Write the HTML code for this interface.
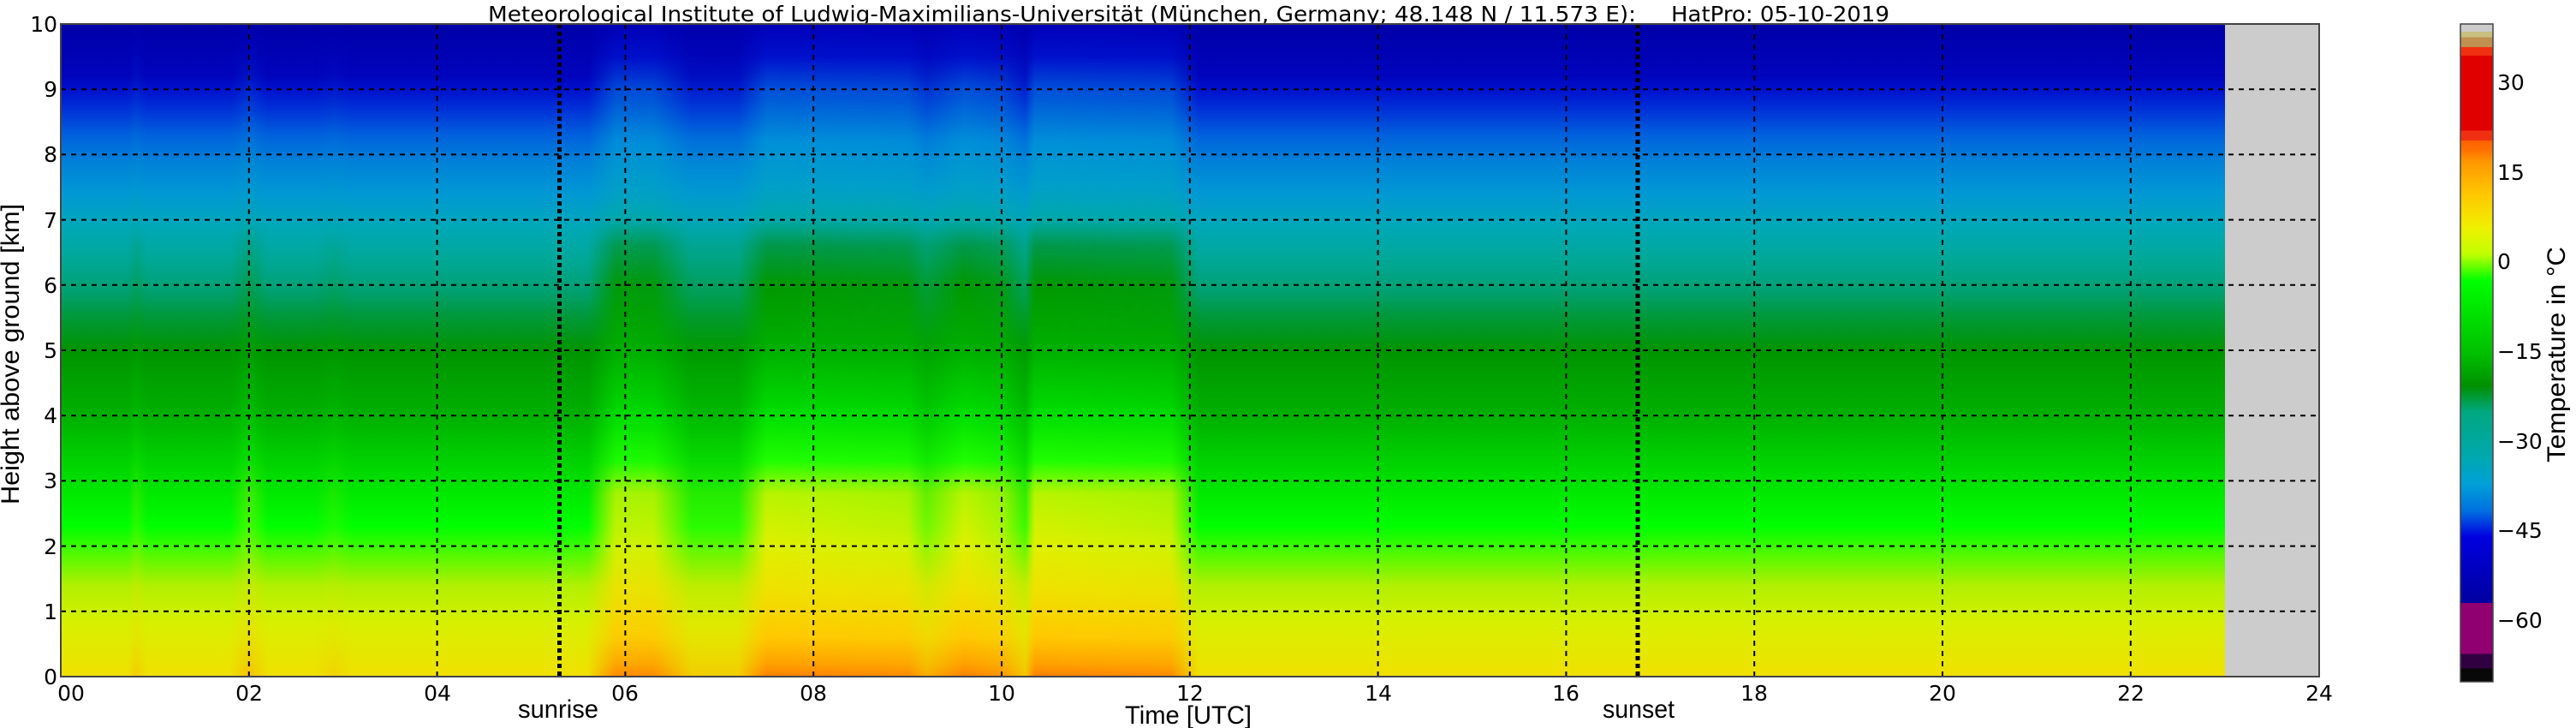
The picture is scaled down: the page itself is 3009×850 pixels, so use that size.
<!DOCTYPE html>
<html><head><meta charset="utf-8"><style>
html,body{margin:0;padding:0;background:#fff;width:3009px;height:850px;overflow:hidden}
svg{display:block}
.t{font-family:"DejaVu Sans","Liberation Sans",sans-serif;font-size:25px;fill:#000}
.n{font-family:"Liberation Sans",sans-serif;font-size:30px;fill:#000}
</style></head><body>
<svg width="3009" height="850" viewBox="0 0 3009 850" xmlns="http://www.w3.org/2000/svg">
<defs>
<linearGradient id="calm" x1="0" y1="28" x2="0" y2="790" gradientUnits="userSpaceOnUse">
<stop offset="0" stop-color="#0000a8"/>
<stop offset="0.08" stop-color="#0004bc"/>
<stop offset="0.1" stop-color="#0010cc"/>
<stop offset="0.13" stop-color="#0030d8"/>
<stop offset="0.17" stop-color="#0060dc"/>
<stop offset="0.21" stop-color="#0080d8"/>
<stop offset="0.26" stop-color="#0098d4"/>
<stop offset="0.31" stop-color="#00a8b8"/>
<stop offset="0.36" stop-color="#00a898"/>
<stop offset="0.41" stop-color="#00a070"/>
<stop offset="0.45" stop-color="#009838"/>
<stop offset="0.5" stop-color="#009400"/>
<stop offset="0.6" stop-color="#00b000"/>
<stop offset="0.7" stop-color="#00e000"/>
<stop offset="0.77" stop-color="#00ff00"/>
<stop offset="0.82" stop-color="#60f800"/>
<stop offset="0.86" stop-color="#b0f000"/>
<stop offset="0.92" stop-color="#d8f000"/>
<stop offset="1" stop-color="#f0e000"/>
</linearGradient>
<linearGradient id="warm" x1="0" y1="28" x2="0" y2="790" gradientUnits="userSpaceOnUse">
<stop offset="0" stop-color="#0000b8"/>
<stop offset="0.05" stop-color="#0010cc"/>
<stop offset="0.1" stop-color="#0050d8"/>
<stop offset="0.18" stop-color="#0090d8"/>
<stop offset="0.25" stop-color="#00a0c8"/>
<stop offset="0.3" stop-color="#00a8a8"/>
<stop offset="0.34" stop-color="#009848"/>
<stop offset="0.4" stop-color="#009800"/>
<stop offset="0.5" stop-color="#00b000"/>
<stop offset="0.6" stop-color="#00e000"/>
<stop offset="0.67" stop-color="#20ff00"/>
<stop offset="0.72" stop-color="#b8f400"/>
<stop offset="0.8" stop-color="#e0f000"/>
<stop offset="0.87" stop-color="#f0e000"/>
<stop offset="0.94" stop-color="#ffc800"/>
<stop offset="0.98" stop-color="#ffa000"/>
<stop offset="1" stop-color="#ff8000"/>
</linearGradient>
<linearGradient id="wmask" x1="71" y1="0" x2="2599" y2="0" gradientUnits="userSpaceOnUse">
<stop offset="0" stop-color="#000"/>
<stop offset="0.0310" stop-color="#000"/>
<stop offset="0.0348" stop-color="#333"/>
<stop offset="0.0400" stop-color="#000"/>
<stop offset="0.0783" stop-color="#000"/>
<stop offset="0.0870" stop-color="#555"/>
<stop offset="0.0957" stop-color="#000"/>
<stop offset="0.1174" stop-color="#000"/>
<stop offset="0.1261" stop-color="#222"/>
<stop offset="0.1348" stop-color="#000"/>
<stop offset="0.2435" stop-color="#000"/>
<stop offset="0.2565" stop-color="#e6e6e6"/>
<stop offset="0.2739" stop-color="#e6e6e6"/>
<stop offset="0.2913" stop-color="#333"/>
<stop offset="0.3130" stop-color="#333"/>
<stop offset="0.3261" stop-color="#fff"/>
<stop offset="0.3913" stop-color="#e6e6e6"/>
<stop offset="0.4000" stop-color="#888"/>
<stop offset="0.4174" stop-color="#fff"/>
<stop offset="0.4348" stop-color="#cccccc"/>
<stop offset="0.4457" stop-color="#444"/>
<stop offset="0.4500" stop-color="#fff"/>
<stop offset="0.5130" stop-color="#e6e6e6"/>
<stop offset="0.5260" stop-color="#000"/>
<stop offset="1" stop-color="#000"/>
</linearGradient>
<mask id="m"><rect x="71" y="28" width="2528" height="762" fill="url(#wmask)"/></mask>
<linearGradient id="cb" x1="0" y1="28" x2="0" y2="796" gradientUnits="userSpaceOnUse">
<stop offset="0" stop-color="#cccccc"/>
<stop offset="0.012" stop-color="#cccccc"/>
<stop offset="0.012" stop-color="#c8c080"/>
<stop offset="0.02" stop-color="#c8c080"/>
<stop offset="0.02" stop-color="#c09050"/>
<stop offset="0.035" stop-color="#c09050"/>
<stop offset="0.035" stop-color="#f03010"/>
<stop offset="0.048" stop-color="#f03010"/>
<stop offset="0.048" stop-color="#e00000"/>
<stop offset="0.162" stop-color="#e00000"/>
<stop offset="0.162" stop-color="#f03010"/>
<stop offset="0.177" stop-color="#f03010"/>
<stop offset="0.177" stop-color="#ff6000"/>
<stop offset="0.191" stop-color="#ff7000"/>
<stop offset="0.21" stop-color="#ff9800"/>
<stop offset="0.26" stop-color="#ffc800"/>
<stop offset="0.31" stop-color="#f0f000"/>
<stop offset="0.35" stop-color="#c0ff00"/>
<stop offset="0.39" stop-color="#00ff00"/>
<stop offset="0.5" stop-color="#00c000"/>
<stop offset="0.55" stop-color="#009000"/>
<stop offset="0.59" stop-color="#00a880"/>
<stop offset="0.66" stop-color="#00a8b0"/>
<stop offset="0.7" stop-color="#00a0d8"/>
<stop offset="0.74" stop-color="#0070e0"/>
<stop offset="0.78" stop-color="#0000e0"/>
<stop offset="0.88" stop-color="#0000a0"/>
<stop offset="0.88" stop-color="#900070"/>
<stop offset="0.958" stop-color="#900070"/>
<stop offset="0.958" stop-color="#300040"/>
<stop offset="0.98" stop-color="#300040"/>
<stop offset="0.98" stop-color="#080808"/>
<stop offset="1" stop-color="#080808"/>
</linearGradient>
</defs>

<!-- title -->
<text class="t" x="570" y="25" textLength="1341" lengthAdjust="spacingAndGlyphs" font-size="28">Meteorological Institute of Ludwig-Maximilians-Universität (München, Germany; 48.148 N / 11.573 E):</text>
<text class="t" x="1952" y="25" textLength="255" lengthAdjust="spacingAndGlyphs" font-size="28">HatPro: 05-10-2019</text>

<!-- heatmap -->
<rect x="71" y="28" width="2528" height="762" fill="url(#calm)"/>
<rect x="71" y="28" width="2528" height="762" fill="url(#warm)" mask="url(#m)"/>
<rect x="2599" y="28" width="110" height="762" fill="#cccccc"/>

<!-- grid -->
<g stroke="#000" stroke-width="2" stroke-dasharray="6,6" fill="none">
<path d="M71 104.2H2709M71 180.4H2709M71 256.6H2709M71 332.8H2709M71 409H2709M71 485.2H2709M71 561.4H2709M71 637.6H2709M71 713.8H2709"/>
<path d="M290.8 28V790M510.6 28V790M730.4 28V790M950.2 28V790M1170 28V790M1389.8 28V790M1609.6 28V790M1829.4 28V790M2049.2 28V790M2269 28V790M2488.8 28V790"/>
</g>
<g stroke="#000" stroke-width="5" stroke-dasharray="5,4">
<path d="M653.5 28V790M1913 28V790"/>
</g>
<rect x="71" y="28" width="2638" height="762" fill="none" stroke="#444" stroke-width="2"/>

<!-- y ticks -->
<g class="t" text-anchor="end">
<text x="67" y="37">10</text>
<text x="67" y="113">9</text>
<text x="67" y="189">8</text>
<text x="67" y="266">7</text>
<text x="67" y="342">6</text>
<text x="67" y="418">5</text>
<text x="67" y="494">4</text>
<text x="67" y="570">3</text>
<text x="67" y="647">2</text>
<text x="67" y="723">1</text>
<text x="67" y="799">0</text>
</g>
<!-- x ticks -->
<g class="t" text-anchor="middle">
<text x="83" y="818">00</text>
<text x="291" y="818">02</text>
<text x="511" y="818">04</text>
<text x="730" y="818">06</text>
<text x="950" y="818">08</text>
<text x="1170" y="818">10</text>
<text x="1390" y="818">12</text>
<text x="1610" y="818">14</text>
<text x="1829" y="818">16</text>
<text x="2049" y="818">18</text>
<text x="2269" y="818">20</text>
<text x="2489" y="818">22</text>
<text x="2709" y="818">24</text>
</g>
<text class="n" x="605" y="838" textLength="94" lengthAdjust="spacingAndGlyphs">sunrise</text>
<text class="n" x="1872" y="838" textLength="84" lengthAdjust="spacingAndGlyphs">sunset</text>
<text class="n" x="1314" y="845" textLength="148" lengthAdjust="spacingAndGlyphs">Time [UTC]</text>
<text class="n" transform="translate(22,589) rotate(-90)" textLength="351" lengthAdjust="spacingAndGlyphs">Height above ground [km]</text>

<!-- colorbar -->
<rect x="2874" y="28" width="38" height="768" fill="url(#cb)" stroke="#444" stroke-width="1.5"/>
<g class="t" font-size="24">
<text x="2917" y="105">30</text>
<text x="2917" y="210">15</text>
<text x="2917" y="314">0</text>
<text x="2917" y="419">−15</text>
<text x="2917" y="524">−30</text>
<text x="2917" y="628">−45</text>
<text x="2917" y="733">−60</text>
</g>
<text class="n" transform="translate(2996,540) rotate(-90)" textLength="252" lengthAdjust="spacingAndGlyphs">Temperature in °C</text>
</svg>
</body></html>
